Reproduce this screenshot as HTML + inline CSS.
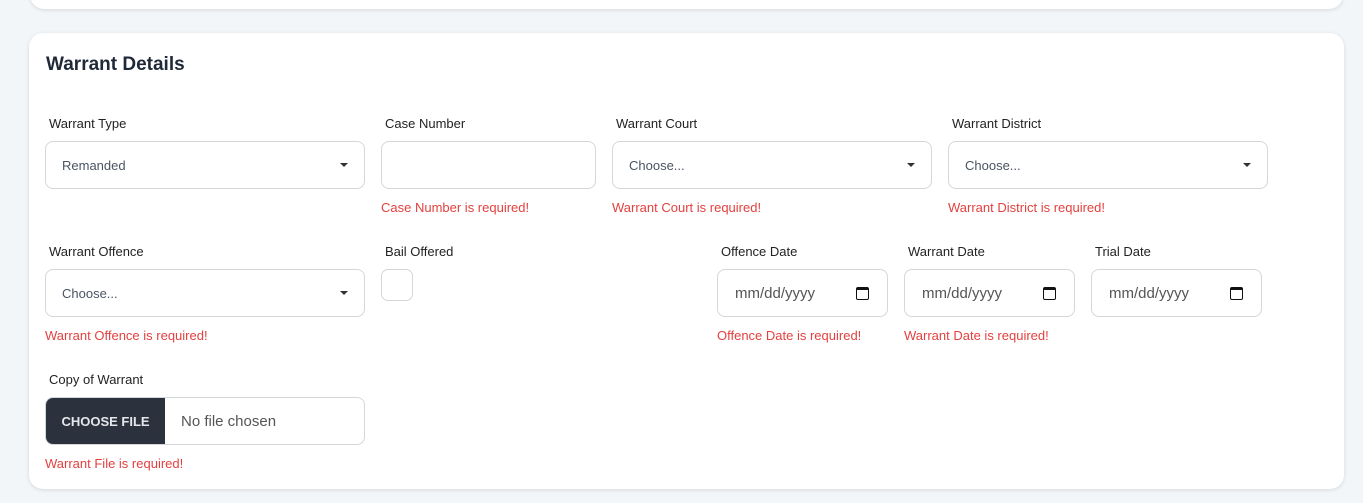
<!DOCTYPE html>
<html><head><style>
*{box-sizing:border-box;margin:0;padding:0}
body{width:1363px;height:503px;background:#f3f6f8;font-family:"Liberation Sans",sans-serif;position:relative;overflow:hidden;color:#1f2937}
.card{position:absolute;background:#fff;border-radius:14px;box-shadow:0 1px 4px rgba(0,0,0,.12)}
.a{position:absolute;white-space:nowrap}
.lbl{font-size:13px;color:#222;line-height:16px}
.err{font-size:13px;color:#e3413f;line-height:16px}
.box{position:absolute;border:1px solid #d4d6da;border-radius:8px;background:#fff}
.sel{font-size:13px;color:#4b5563;padding-left:16px;line-height:48px}
.sel:after{content:"";position:absolute;right:16px;top:21px;border-left:4px solid transparent;border-right:4px solid transparent;border-top:4px solid #333}
.date{font-size:15px;color:#555;padding-left:17px;line-height:48px}
.cal{position:absolute;right:18px;top:17px;width:13px;height:13px;border:1.5px solid #111;border-top-width:3px;border-radius:2px}
</style></head><body>
<div class="card" style="left:30px;top:-20px;width:1313px;height:29px"></div>
<div class="card" style="left:29px;top:33px;width:1315px;height:456px"></div>
<div class="a" style="left:46px;top:54px;font-size:19px;font-weight:bold;color:#1f2937">Warrant Details</div>

<div class="a lbl" style="left:49px;top:116px">Warrant Type</div>
<div class="a lbl" style="left:385px;top:116px">Case Number</div>
<div class="a lbl" style="left:616px;top:116px">Warrant Court</div>
<div class="a lbl" style="left:952px;top:116px">Warrant District</div>
<div class="box sel" style="left:45px;top:141px;width:320px;height:48px">Remanded</div>
<div class="box" style="left:381px;top:141px;width:215px;height:48px"></div>
<div class="box sel" style="left:612px;top:141px;width:320px;height:48px">Choose...</div>
<div class="box sel" style="left:948px;top:141px;width:320px;height:48px">Choose...</div>
<div class="a err" style="left:381px;top:200px">Case Number is required!</div>
<div class="a err" style="left:612px;top:200px">Warrant Court is required!</div>
<div class="a err" style="left:948px;top:200px">Warrant District is required!</div>

<div class="a lbl" style="left:49px;top:244px">Warrant Offence</div>
<div class="a lbl" style="left:385px;top:244px">Bail Offered</div>
<div class="a lbl" style="left:721px;top:244px">Offence Date</div>
<div class="a lbl" style="left:908px;top:244px">Warrant Date</div>
<div class="a lbl" style="left:1095px;top:244px">Trial Date</div>
<div class="box sel" style="left:45px;top:269px;width:320px;height:48px">Choose...</div>
<div class="box" style="left:381px;top:269px;width:32px;height:32px;border-radius:7px"></div>
<div class="box date" style="left:717px;top:269px;width:171px;height:48px">mm/dd/yyyy<span class="cal"></span></div>
<div class="box date" style="left:904px;top:269px;width:171px;height:48px">mm/dd/yyyy<span class="cal"></span></div>
<div class="box date" style="left:1091px;top:269px;width:171px;height:48px">mm/dd/yyyy<span class="cal"></span></div>
<div class="a err" style="left:45px;top:328px">Warrant Offence is required!</div>
<div class="a err" style="left:717px;top:328px">Offence Date is required!</div>
<div class="a err" style="left:904px;top:328px">Warrant Date is required!</div>

<div class="a lbl" style="left:49px;top:372px">Copy of Warrant</div>
<div class="box" style="left:45px;top:397px;width:320px;height:48px;overflow:hidden">
<div class="a" style="left:0;top:0;width:119px;height:46px;background:#2b323e;color:#e5e7eb;font-size:13px;font-weight:bold;line-height:47px;text-align:center">CHOOSE FILE</div>
<div class="a" style="left:135px;top:0;line-height:47px;font-size:15px;color:#555">No file chosen</div>
</div>
<div class="a err" style="left:45px;top:456px">Warrant File is required!</div>
</body></html>
